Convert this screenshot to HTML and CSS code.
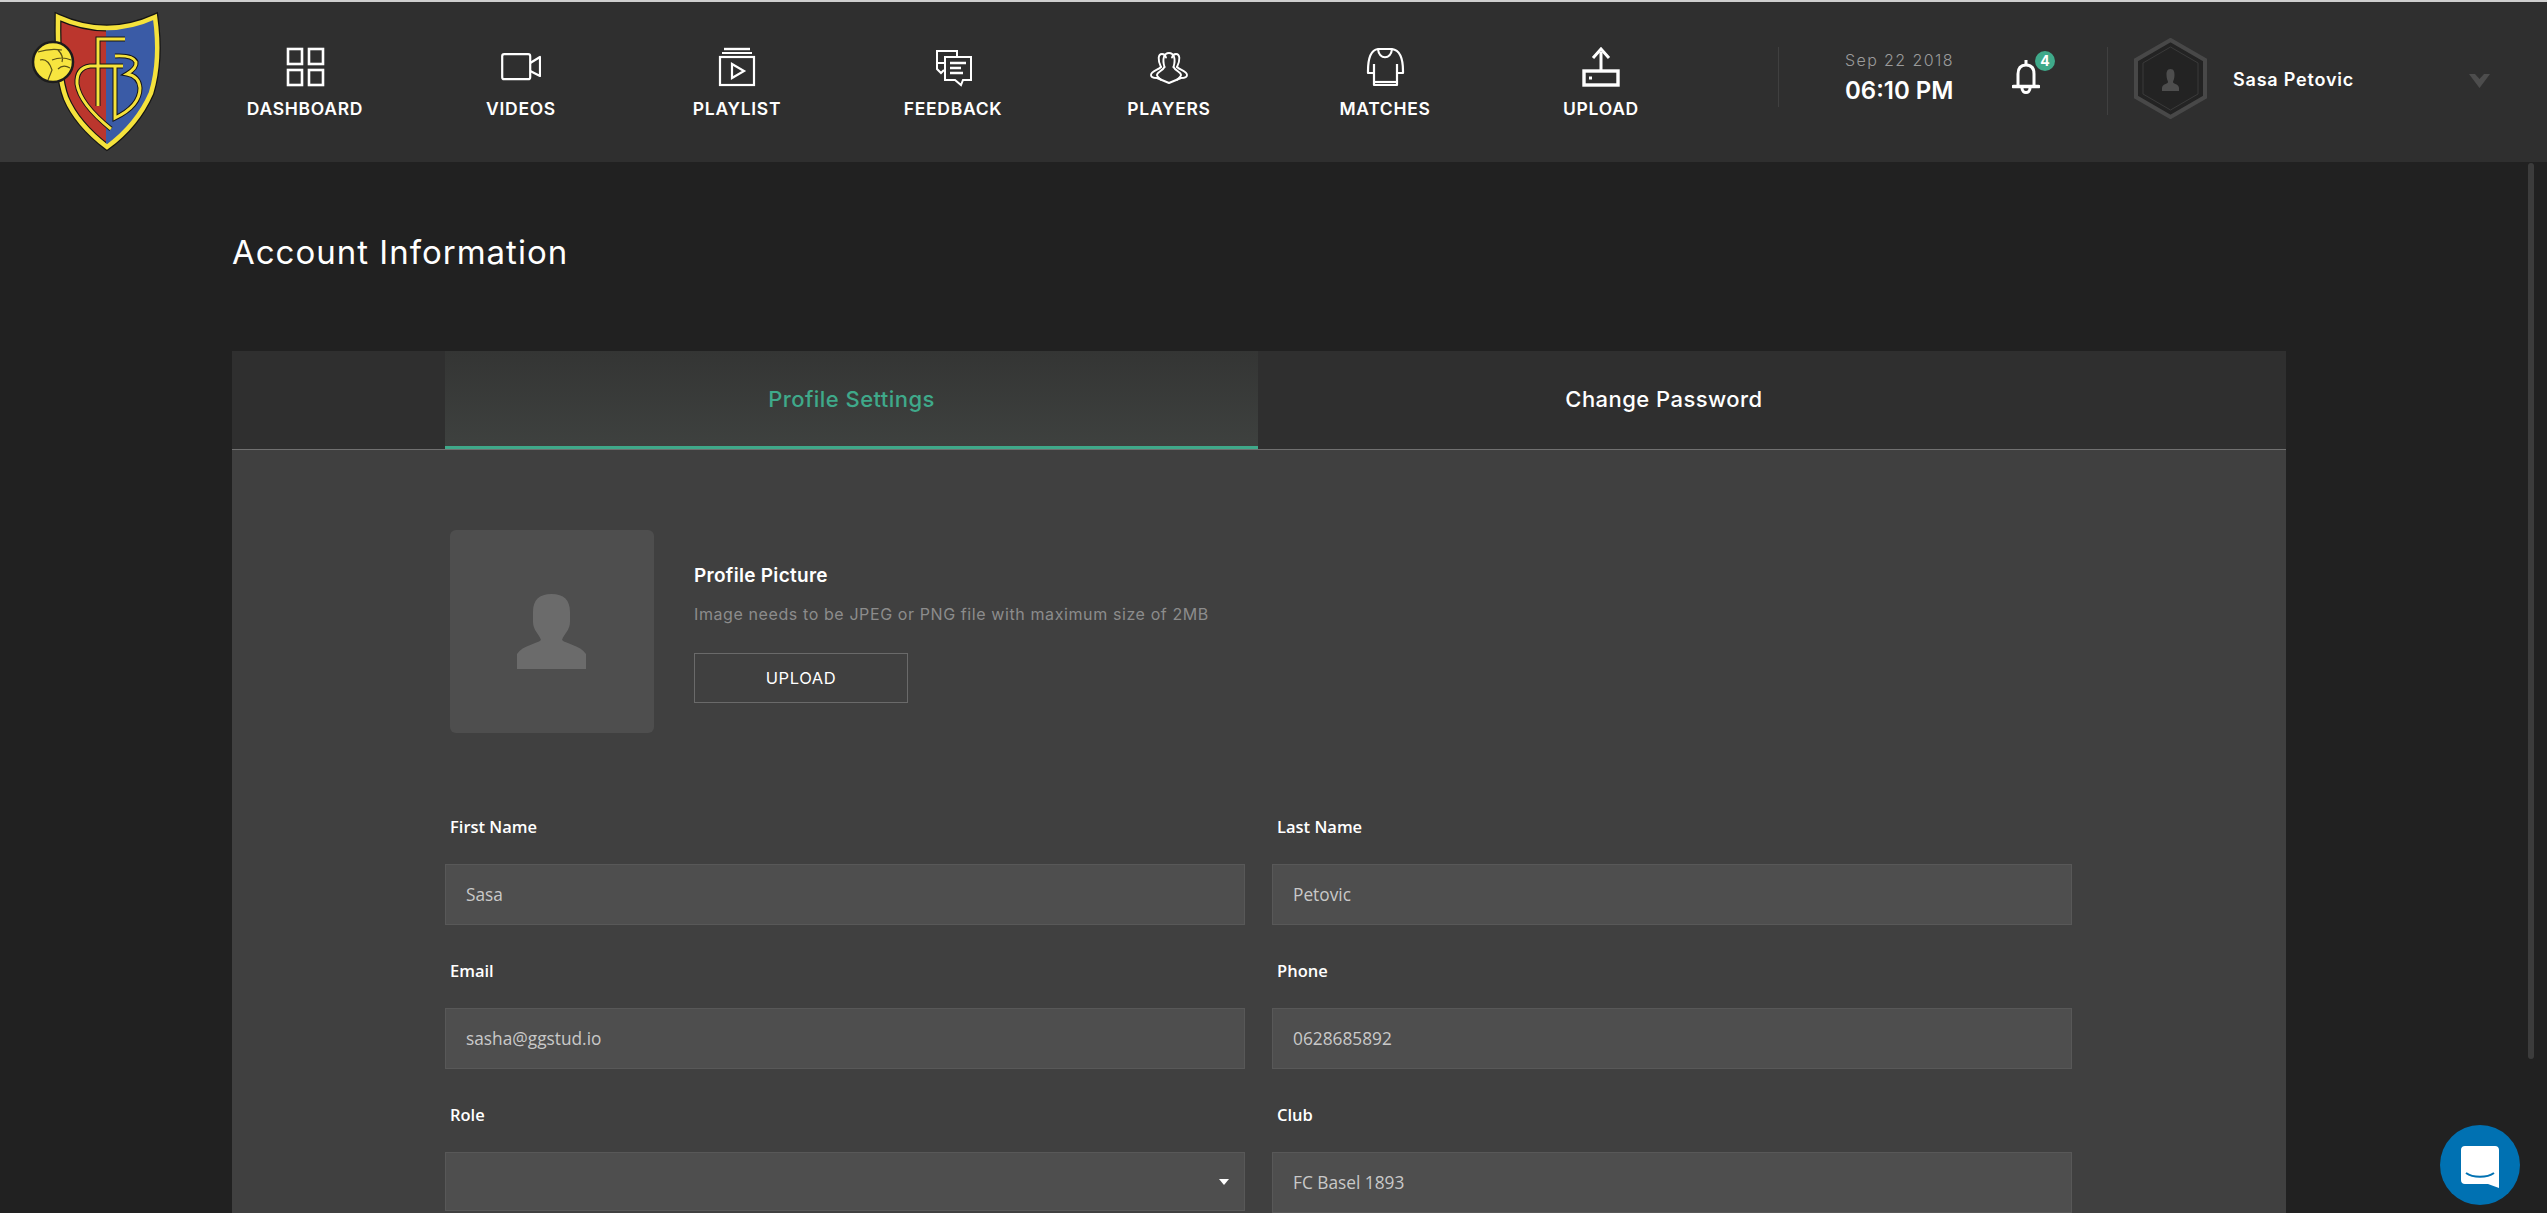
FILE: index.html
```html
<!DOCTYPE html>
<html lang="en">
<head>
<meta charset="utf-8">
<title>Account Information</title>
<link rel="stylesheet" href="styles.css">
</head>
<body>
<div class="app">
  <header class="topbar">
    <div class="logo-box">
      <svg class="crest" viewBox="0 0 200 162" width="200" height="162">
        <defs>
          <clipPath id="shieldClip"><path d="M58 17 Q107 39 155 17 Q161 60 151 93 Q137 125 107 147 Q77 124 66 98 Q57 75 58 17Z"/></clipPath>
        </defs>
        <path d="M58 17 Q107 39 155 17 Q161 60 151 93 Q137 125 107 147 Q77 124 66 98 Q57 75 58 17Z" fill="#bb362d" stroke="#151515" stroke-width="7"/>
        <rect x="106" y="10" width="60" height="140" fill="#3a5ba6" clip-path="url(#shieldClip)"/>
        <path d="M58 17 Q107 39 155 17 Q161 60 151 93 Q137 125 107 147 Q77 124 66 98 Q57 75 58 17Z" fill="none" stroke="#f5e23c" stroke-width="4.5"/>
        <g fill="none" stroke="#151515" stroke-width="5">
          <path d="M125 39H98V106M123 66H90Q76 68 77 84Q80 104 111 129M115 66V118Q140 106 140 88Q139 76 127 74Q137 68 136 62Q133 55 115 56"/>
        </g>
        <g fill="none" stroke="#f5e23c" stroke-width="3">
          <path d="M125 39H98V106M123 66H90Q76 68 77 84Q80 104 111 129M115 66V118Q140 106 140 88Q139 76 127 74Q137 68 136 62Q133 55 115 56"/>
        </g>
        <circle cx="53" cy="62" r="20" fill="#f7e53f" stroke="#1c1c1c" stroke-width="2.5"/>
        <path d="M38 52Q50 48 62 50M40 60Q48 58 52 70L48 80M52 60Q62 56 71 60M58 69Q63 64 70 68M58 50Q64 56 62 62" fill="none" stroke="#5a5217" stroke-width="1.2"/>
      </svg>
    </div>
    <nav class="nav">
      <a class="nav-item">
        <svg class="nav-icon" viewBox="0 0 40 40"><g fill="none" stroke="#fff" stroke-width="2.6"><rect x="3" y="2" width="14" height="15"/><rect x="24" y="2" width="14" height="15"/><rect x="3" y="23" width="14" height="15"/><rect x="24" y="23" width="14" height="15"/></g></svg>
        <span>DASHBOARD</span>
      </a>
      <a class="nav-item">
        <svg class="nav-icon" viewBox="0 0 40 40"><g fill="none" stroke="#fff" stroke-width="2.2" stroke-linejoin="round"><rect x="1.2" y="7.2" width="28" height="25" rx="2"/><path d="M29.2 16 39 10V29L29.2 24"/></g></svg>
        <span>VIDEOS</span>
      </a>
      <a class="nav-item">
        <svg class="nav-icon" viewBox="0 0 40 40"><g fill="none" stroke="#fff" stroke-width="2.2"><rect x="3" y="10" width="34" height="28"/><path d="M7 2H33" stroke-width="2.4"/><path d="M5 6H35" stroke-width="2"/><path d="M15 17 27 24 15 31Z"/></g></svg>
        <span>PLAYLIST</span>
      </a>
      <a class="nav-item">
        <svg class="nav-icon" viewBox="0 0 40 40"><g fill="none" stroke="#fff" stroke-width="2"><path d="M11 16H4V4H24V9"/><path d="M4 16V22L8 26 11 23"/><path d="M12 10H38V33H30L28 38 22 33H12Z" fill="#2f2f2f"/><path d="M17 16H33M17 21H28M17 26H30" stroke-width="2.4"/></g></svg>
        <span>FEEDBACK</span>
      </a>
      <a class="nav-item">
        <svg class="nav-icon" viewBox="0 0 40 40"><g fill="none" stroke="#fff" stroke-width="1.9" stroke-linejoin="round" stroke-linecap="round"><path d="M12 20C8.500 13 9 7 13 7 15.500 7 16.500 8.500 17 10.500"/><path d="M28 20C31.500 13 31 7 27 7 24.500 7 23.500 8.500 23 10.500"/><path d="M15.500 20C13 12 15 6 20 6 25 6 27 12 24.500 20"/><path d="M12 20C9 23 2 24 2 28 2 30 5 31 8 31L20 36 32 31C35 31 38 30 38 28 38 24 31 23 28 20"/><path d="M15.500 20C13.500 24 8 25 8 28 8 29.500 10 31 12 32.700"/><path d="M24.500 20C26.500 24 32 25 32 28 32 29.500 30 31 28 32.700"/></g></svg>
        <span>PLAYERS</span>
      </a>
      <a class="nav-item">
        <svg class="nav-icon" viewBox="0 0 40 40"><g fill="none" stroke="#fff" stroke-width="2.2" stroke-linejoin="round"><path d="M13 2H27C34 3 38 10 38 24V26H32V38H9V26H3V24C3 10 6 3 13 2Z"/><path d="M13 2C14 13 26 13 27 2"/><path d="M9 26V17M32 26V17"/><path d="M9 35H32"/></g></svg>
        <span>MATCHES</span>
      </a>
      <a class="nav-item">
        <svg class="nav-icon" viewBox="0 0 40 40"><g fill="none" stroke="#fff"><path d="M20 24V5" stroke-width="3"/><path d="M12 11 20 2 28 11" stroke-width="3"/><rect x="3" y="24" width="34" height="14" stroke-width="3.4"/></g><rect x="8" y="29.5" width="3" height="3" fill="#fff"/></svg>
        <span>UPLOAD</span>
      </a>
    </nav>
    <div class="divider divider-first"></div>
    <div class="clock">
      <div class="clock-date">Sep 22 2018</div>
      <div class="clock-time">06:10 PM</div>
    </div>
    <div class="bell">
      <svg viewBox="0 0 28 36" width="28" height="36"><g fill="none" stroke="#fff" stroke-width="3"><path d="M14 1V5"/><path d="M6 27V15C6 9 9 6 14 6 19 6 22 9 22 15V27"/><path d="M1.500 27.500H26.500" stroke-width="3.600" stroke-linecap="round"/><path d="M10 29C10 35 18 35 18 29"/></g></svg>
      <span class="badge">4</span>
    </div>
    <div class="divider divider-second"></div>
    <svg class="hex" viewBox="0 0 73 81" width="73" height="81">
      <path d="M36.5 2 71 22V59L36.5 79 2 59V22Z" fill="#232323" stroke="#484848" stroke-width="4"/>
      <path d="M36.5 9 64 25V56L36.5 72 9 56V25Z" fill="none" stroke="#3a3a3a" stroke-width="1"/>
      <path d="M36.5 31C33 31 32.500 34 32.500 37 32.500 41 34 43 34 44 34 46 28 46 28 50V53H45V50C45 46 39 46 39 44 39 43 40.500 41 40.500 37 40.500 34 40 31 36.500 31Z" fill="#4e4e4e"/>
    </svg>
    <div class="user-name">Sasa Petovic</div>
    <svg class="chevron" viewBox="0 0 21 14" width="21" height="14"><path d="M0 0 6 0 10.500 5 15 0 21 0 10.500 14Z" fill="#4d4d4d"/></svg>
  </header>

  <main class="content">
    <h1 class="page-title">Account Information</h1>
    <section class="panel">
      <div class="tabs">
        <div class="tab tab-active">Profile Settings</div>
        <div class="tab">Change Password</div>
      </div>
      <div class="panel-body">
        <div class="picture-row">
          <div class="picture">
            <svg viewBox="0 0 70 75" width="70" height="75"><path d="M34.500 0C22 0 16 6 16 18V28C16 36 22 40 24 46 20 50 6 51 0 60V75H69V60C63 51 49 50 45 46 47 40 53 36 53 28V18C53 6 47 0 34.500 0Z" fill="#6b6b6b"/></svg>
          </div>
          <div class="picture-info">
            <div class="picture-title">Profile Picture</div>
            <div class="picture-hint">Image needs to be JPEG or PNG file with maximum size of 2MB</div>
            <button class="upload-btn" type="button">UPLOAD</button>
          </div>
        </div>
        <div class="form-grid">
          <div class="field"><div class="field-label">First Name</div><div class="field-input">Sasa</div></div>
          <div class="field"><div class="field-label">Last Name</div><div class="field-input">Petovic</div></div>
          <div class="field"><div class="field-label">Email</div><div class="field-input">sasha@ggstud.io</div></div>
          <div class="field"><div class="field-label">Phone</div><div class="field-input">0628685892</div></div>
          <div class="field"><div class="field-label">Role</div><div class="field-input field-select"><span class="select-arrow"></span></div></div>
          <div class="field"><div class="field-label">Club</div><div class="field-input">FC Basel 1893</div></div>
        </div>
      </div>
    </section>
  </main>

  <div class="scroll-thumb"></div>
  <button class="chat" type="button" aria-label="Chat">
    <svg viewBox="0 0 38 42" width="38" height="42"><path d="M4 0H34C36.500 0 38 1.500 38 4V42L27 38H4C1.500 38 0 36.500 0 34V4C0 1.500 1.500 0 4 0Z" fill="#fff"/><path d="M5 27C12 32 26 32 33 27" fill="none" stroke="#0071b2" stroke-width="2"/></svg>
  </button>
</div>
</body>
</html>
```

FILE: styles.css
```css
* { box-sizing: border-box; }
html, body { margin: 0; height: 100%; overflow: hidden; }
body { background: #212121; color: #fff; font-family: "Inter", "Liberation Sans", sans-serif; }

.app { position: relative; height: 100vh; overflow: hidden; display: flex; flex-direction: column; }

.topbar { flex: none; height: 162px; display: flex; align-items: flex-start; background: #2f2f2f; border-top: 2px solid #cfcfcf; }
.logo-box { width: 200px; height: 160px; margin-right: -3px; background: #383838; flex: none; }
.crest { display: block; margin-top: -2px; }

.nav { display: grid; grid-template-columns: repeat(7, 216px); flex: none; position: relative; }
.nav-item { display: flex; flex-direction: column; align-items: center; padding-top: 45px; color: #fff; font-size: 17.500px; font-weight: 600; line-height: 20px; letter-spacing: 0.7px; }
.nav-icon { width: 40px; height: 40px; display: block; margin-bottom: 12px; }

.divider { flex: none; width: 1px; background: #404040; }
.divider-first { height: 60px; margin: 45px 0 0 69px; }
.divider-second { height: 68px; margin: 45px 0 0 67px; }

.clock { flex: none; margin: 48px 0 0 66px; width: 108px; }
.clock-date { font-size: 16px; line-height: 20px; font-weight: 300; color: #9b9b9b; letter-spacing: 1.4px; white-space: nowrap; }
.clock-time { margin-top: 9px; font-size: 24px; line-height: 24px; font-weight: 600; white-space: nowrap; letter-spacing: 0; }

.bell { position: relative; flex: none; width: 28px; height: 36px; margin: 57px 0 0 59px; }
.bell svg { display: block; }
.badge { position: absolute; top: -8px; left: 23px; width: 20px; height: 20px; border-radius: 50%; background: #3fa98a; color: #fff; font-size: 14px; font-weight: 700; line-height: 20px; text-align: center; }

.hex { flex: none; margin: 36px 0 0 26px; }
.user-name { flex: none; width: 120px; margin: 68px 0 0 26px; font-size: 18px; line-height: 20px; font-weight: 600; letter-spacing: 0.8px; white-space: nowrap; }
.chevron { flex: none; margin: 72px 0 0 116px; }

.content { flex: 1; min-height: 0; padding: 0 0 0 232px; }
.page-title { margin: 0; padding-top: 72px; height: 189px; font-size: 33px; line-height: 36px; font-weight: 400; letter-spacing: 1px; }

.panel { width: 2054px; background: #404040; }
.tabs { display: flex; height: 99px; padding-left: 213px; background: #2f2f2f; border-bottom: 1px solid #707070; }
.tab { width: 812px; display: flex; align-items: center; justify-content: center; padding-bottom: 2px; font-size: 22px; font-weight: 500; letter-spacing: 0.45px; color: #fff; }
.tab-active { width: 813px; padding-bottom: 0; color: #3fa98a; background: linear-gradient(#343534, #3e413f); border-bottom: 3px solid #3fa98a; }

.panel-body { padding: 80px 0 0 213px; }
.picture-row { display: flex; gap: 40px; margin-left: 5px; }
.picture { width: 204px; height: 203px; border-radius: 6px; background: #4e4e4e; display: flex; align-items: center; justify-content: center; }
.picture-info { padding-top: 35px; }
.picture-title { font-size: 19px; line-height: 22px; font-weight: 600; letter-spacing: 0.3px; }
.picture-hint { margin-top: 17px; font-size: 16px; line-height: 20px; font-weight: 400; letter-spacing: 0.6px; color: #8c8c8c; white-space: nowrap; }
.upload-btn { display: block; width: 214px; height: 50px; margin-top: 29px; background: transparent; border: 1px solid #6a6a6a; color: #fff; font: 400 16.500px "Inter", sans-serif; letter-spacing: 0.6px; }

.form-grid { display: grid; grid-template-columns: 800px 800px; column-gap: 27px; row-gap: 36px; margin-top: 84px; }
.field-label { padding-left: 5px; margin-bottom: 27px; font-family: "Open Sans", sans-serif; font-size: 16.500px; line-height: 20px; font-weight: 600; color: #fff; }
.field-input { height: 61px; padding: 0 20px; display: flex; align-items: center; background: #4e4e4e; border: 1px solid #585858; font-family: "Open Sans", sans-serif; font-size: 17.300px; color: #c9c9c9; position: relative; }
.field-select { height: 59px; }
.select-arrow { position: absolute; right: 15px; top: 26px; width: 0; height: 0; border-left: 5px solid transparent; border-right: 5px solid transparent; border-top: 6px solid #fff; }

.scroll-thumb { position: absolute; left: 2528px; top: 163px; width: 6px; height: 896px; border-radius: 3px; background: #3c3c3c; }

.chat { position: absolute; left: 2440px; top: 1125px; width: 80px; height: 80px; padding: 0; border: 0; border-radius: 50%; background: #0071b2; display: flex; align-items: center; justify-content: center; }
.chat svg { display: block; margin-top: 4px; }
```
